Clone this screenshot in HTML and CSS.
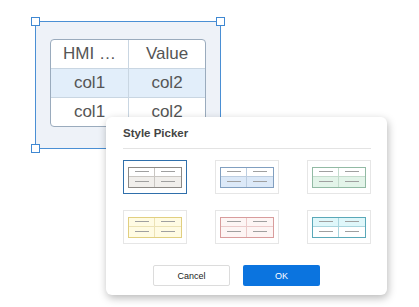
FILE: index.html
```html
<!DOCTYPE html>
<html lang="en">
<head>
    <meta charset="UTF-8">
    <meta name="viewport" content="width=device-width, initial-scale=1.0">
    <title>Style Picker</title>
    <link rel="stylesheet" href="styles.css">
</head>
<body>
    <div class="canvas">
        <div class="frame">
            <span class="handle tl"></span>
            <span class="handle tr"></span>
            <span class="handle bl"></span>
            <table class="grid">
                <tr class="head"><td>HMI …</td><td>Value</td></tr>
                <tr class="hl"><td>col1</td><td>col2</td></tr>
                <tr><td>col1</td><td>col2</td></tr>
            </table>
        </div>

        <div class="dialog">
            <h4>Style Picker</h4>
            <div class="tiles">
                <div class="tile selected"><div class="mini grey"><i></i><i></i><i></i><i></i></div></div>
                <div class="tile"><div class="mini blue"><i></i><i></i><i></i><i></i></div></div>
                <div class="tile"><div class="mini green"><i></i><i></i><i></i><i></i></div></div>
                <div class="tile"><div class="mini yellow"><i></i><i></i><i></i><i></i></div></div>
                <div class="tile"><div class="mini red"><i></i><i></i><i></i><i></i></div></div>
                <div class="tile"><div class="mini cyan"><i></i><i></i><i></i><i></i></div></div>
            </div>
            <div class="actions">
                <button class="cancel">Cancel</button>
                <button class="ok">OK</button>
            </div>
        </div>
    </div>
</body>
</html>
```

FILE: styles.css
```css
body { margin: 0; background: #fff; font-family: "Liberation Sans", Arial, sans-serif; }
.canvas { position: relative; width: 419px; height: 307px; padding: 21px 0 0 35px; box-sizing: border-box; }

.frame { position: relative; width: 186px; height: 128px; box-sizing: border-box; border: 1px solid #4a8fd4; background: #eef2f8; padding: 17px 0 0 14px; }
.handle { position: absolute; width: 7px; height: 7px; background: #fff; border: 1px solid #3f88d2; }
.handle.tl { left: -5px; top: -5px; }
.handle.tr { right: -5px; top: -5px; }
.handle.bl { left: -5px; bottom: -5px; }

.grid { width: 156px; border-collapse: separate; border-spacing: 0; border: 1px solid #9aabbd; border-radius: 4px; background: #fff; overflow: hidden; }
.grid td { height: 28px; padding: 0; text-align: center; font-size: 17px; color: #555; border-top: 1px solid #c9d6e2; }
.grid td + td { border-left: 1px solid #c9d6e2; }
.grid tr.head td { border-top: none; }
.grid tr.hl td { background: #e2eefa; }
.grid td:first-child { width: 77px; }

.dialog { position: absolute; left: 106px; top: 117px; width: 281px; height: 178px; box-sizing: border-box; background: #fff; border-radius: 6px; box-shadow: 1px 3px 8px rgba(0,0,0,0.28); padding: 10px 16px 0 17px; }
.dialog h4 { margin: 0; font-size: 11.5px; font-weight: bold; color: #444; padding-bottom: 9px; border-bottom: 1px solid #e3e3e3; }

.tiles { display: grid; grid-template-columns: repeat(3, 64px); column-gap: 28px; row-gap: 16px; margin-top: 11px; }
.tile { width: 64px; height: 34px; box-sizing: border-box; border: 1px solid #e6e6e6; display: flex; align-items: center; justify-content: center; }
.tile.selected { border: 1.5px solid #2f6fab; }

.mini { --edge: #888; --line: #ccc; width: 54px; height: 21px; box-sizing: border-box; border: 1px solid var(--edge); display: grid; grid-template-columns: 1fr 1fr; grid-template-rows: 1fr 1fr; }
.mini i { display: flex; align-items: center; justify-content: center; }
.mini i::after { content: ""; width: 14px; height: 1px; background: #a0a0a0; }
.mini i:nth-child(odd) { border-right: 1px solid var(--line); }
.mini i:nth-child(-n+2) { border-bottom: 1px solid var(--line); }

.mini.grey { --edge: #8d8a86; --line: #c9c6c2; }
.mini.grey i:nth-child(n+3) { background: #f1efec; }
.mini.blue { --edge: #819fc0; --line: #bccde0; }
.mini.blue i:nth-child(n+3) { background: #dce9f8; }
.mini.green { --edge: #92baa4; --line: #c4dccd; }
.mini.green i:nth-child(n+3) { background: #e3f4e9; }
.mini.yellow { --edge: #e1cf80; --line: #ece2b5; background: #fffbe3; }
.mini.red { --edge: #d89c9c; --line: #ebcaca; background: #fdf5f4; }
.mini.cyan { --edge: #5aa8b8; --line: #a9d5de; }
.mini.cyan i:nth-child(-n+2) { background: #dff7fa; }

.actions { display: flex; gap: 13px; margin-top: 21px; padding-left: 30px; }
.actions button { width: 77px; height: 21px; font-family: "Liberation Sans", Arial, sans-serif; font-size: 9px; border-radius: 2px; cursor: pointer; }
.cancel { background: #fff; border: 1px solid #dcdcdc; color: #222; }
.ok { background: #0b74df; border: none; color: #fff; }
```
